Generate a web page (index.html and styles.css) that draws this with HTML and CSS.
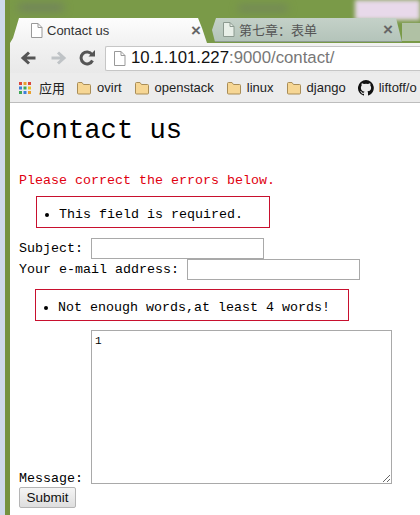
FILE: index.html
```html
<!DOCTYPE html>
<html lang="en">
<head>
<meta charset="utf-8">
<title>Contact us</title>
<link rel="stylesheet" href="styles.css">
</head>
<body>
<div class="window">
  <div class="desktop-edge"></div>
  <div class="browser">
    <div class="tabstrip">
      <div class="blur blur-a"></div>
      <div class="blur blur-b"></div>
      <div class="pink"></div>
      <div class="tab tab-active">
        <svg class="page-icon" width="13" height="15" viewBox="0 0 13 15"><path d="M1.500 .5h6.500l4 4v10h-10.500z" fill="#fff" stroke="#999"/><path d="M8 .5v4h4" fill="none" stroke="#999"/></svg>
        <span class="tab-title">Contact us</span>
        <span class="tab-close">×</span>
      </div>
      <div class="tab tab-other">
        <svg class="page-icon" width="13" height="15" viewBox="0 0 13 15"><path d="M1.500 .5h6.500l4 4v10h-10.500z" fill="#e8efe8" stroke="#8c9a90"/><path d="M8 .5v4h4" fill="none" stroke="#8c9a90"/></svg>
        <span class="tab-title tab-title-cjk">第七章：表单</span>
        <span class="tab-close">×</span>
      </div>
      <div class="tab-new"></div>
    </div>
    <div class="toolbar">
      <svg class="nav" width="17" height="16" viewBox="0 0 17 16"><path d="M15.500 8H4M9 2.500 3 8l6 5.500" fill="none" stroke="#555" stroke-width="3"/></svg>
      <svg class="nav" width="17" height="16" viewBox="0 0 17 16"><path d="M1.500 8H13M8 2.500 14 8l-6 5.500" fill="none" stroke="#bfc3c6" stroke-width="3"/></svg>
      <svg class="nav nav-reload" width="17" height="16" viewBox="0 0 17 16"><path d="M13.500 10.500A6 6 0 1 1 13 4.500" fill="none" stroke="#555" stroke-width="3"/><path d="M9.500 6.500h6.500V0z" fill="#555"/></svg>
      <div class="omnibox">
        <svg class="page-icon" width="13" height="15" viewBox="0 0 13 15"><path d="M1.500 .5h6.500l4 4v10h-10.500z" fill="#fff" stroke="#999"/><path d="M8 .5v4h4" fill="none" stroke="#999"/></svg>
        <span class="url"><span class="host">10.1.101.227</span>:9000/contact/</span>
      </div>
    </div>
    <div class="bookmarks">
      <span class="bm">
        <svg width="14" height="14" viewBox="0 0 14 14"><rect x="1" y="1" width="3" height="3" fill="#d9453a"/><rect x="5.500" y="1" width="3" height="3" fill="#e9a02d"/><rect x="10" y="1" width="3" height="3" fill="#d9453a"/><rect x="1" y="5.500" width="3" height="3" fill="#3d7fd9"/><rect x="5.500" y="5.500" width="3" height="3" fill="#3fa757"/><rect x="10" y="5.500" width="3" height="3" fill="#e9c02d"/><rect x="1" y="10" width="3" height="3" fill="#3fa757"/><rect x="5.500" y="10" width="3" height="3" fill="#3d7fd9"/><rect x="10" y="10" width="3" height="3" fill="#e9a02d"/></svg>
        <span class="bm-cjk">应用</span>
      </span>
      <span class="bm"><svg class="folder" width="16" height="14" viewBox="0 0 16 14"><path d="M1.500 12V2.500q0-1 1-1h3.500l1.500 2h6q1 0 1 1V12q0 1-1 1h-11q-1 0-1-1z" fill="#f6d694" stroke="#a98d57"/></svg>ovirt</span>
      <span class="bm"><svg class="folder" width="16" height="14" viewBox="0 0 16 14"><path d="M1.500 12V2.500q0-1 1-1h3.500l1.500 2h6q1 0 1 1V12q0 1-1 1h-11q-1 0-1-1z" fill="#f6d694" stroke="#a98d57"/></svg>openstack</span>
      <span class="bm"><svg class="folder" width="16" height="14" viewBox="0 0 16 14"><path d="M1.500 12V2.500q0-1 1-1h3.500l1.500 2h6q1 0 1 1V12q0 1-1 1h-11q-1 0-1-1z" fill="#f6d694" stroke="#a98d57"/></svg>linux</span>
      <span class="bm"><svg class="folder" width="16" height="14" viewBox="0 0 16 14"><path d="M1.500 12V2.500q0-1 1-1h3.500l1.500 2h6q1 0 1 1V12q0 1-1 1h-11q-1 0-1-1z" fill="#f6d694" stroke="#a98d57"/></svg>django</span>
      <span class="bm"><svg width="16" height="16" viewBox="0 0 16 16"><path fill="#111" d="M8 0a8 8 0 0 0-2.500 15.600c.4.100.5-.2.500-.4v-1.400c-2.200.5-2.700-1-2.700-1-.4-.9-.9-1.200-.9-1.200-.7-.5.100-.5.100-.5.800.100 1.200.8 1.200.8.700 1.200 1.900.9 2.300.7.100-.5.300-.9.500-1.100-1.800-.2-3.600-.9-3.600-4 0-.9.300-1.600.8-2.100-.1-.2-.4-1 .100-2.100 0 0 .7-.2 2.200.8a7.600 7.600 0 0 1 4 0c1.500-1 2.200-.8 2.200-.8.400 1.100.2 1.900.1 2.100.5.600.8 1.300.8 2.100 0 3.100-1.900 3.700-3.700 3.900.3.300.6.800.6 1.500v2.200c0 .2.100.5.600.4A8 8 0 0 0 8 0z"/></svg>liftoff/o</span>
    </div>
    <main class="page">
      <h1 class="title">Contact us</h1>
      <p class="error-summary">Please correct the errors below.</p>
      <form class="contact-form">
        <ul class="errorlist errorlist-first"><li>This field is required.</li></ul>
        <div class="row">Subject: <input class="field" type="text"></div>
        <div class="row">Your e-mail address: <input class="field" type="text"></div>
        <ul class="errorlist errorlist-second"><li>Not enough words,at least 4 words!</li></ul>
        <div class="row message-row"><span class="message-label">Message: </span><textarea class="message">1</textarea></div>
        <button class="submit" type="button">Submit</button>
      </form>
    </main>
  </div>
</div>
</body>
</html>
```
FILE: styles.css
```css
html, body { margin: 0; padding: 0; }
body { width: 420px; height: 515px; overflow: hidden; background: #fff; }
.window { display: flex; width: 420px; height: 515px; overflow: hidden; }
.desktop-edge { width: 10px; flex: none; background: linear-gradient(90deg, #cfd9ea 0 5px, #76923f 5px 10px); }
.browser { flex: 1; min-width: 0; display: flex; flex-direction: column; }
.tabstrip { position: relative; height: 43px; flex: none; display: flex; align-items: flex-end; background: #7a9a48; box-sizing: border-box; }
.blur { position: absolute; filter: blur(4px); background: #70805f; border-radius: 4px; }
.blur-a { left: 8px; top: 4px; width: 46px; height: 7px; }
.blur-b { left: 228px; top: 6px; width: 50px; height: 5px; }
.pink { position: absolute; left: 345px; top: 0; width: 65px; height: 20px; background: #e8d9ea; filter: blur(2px); }
.tab { position: relative; display: flex; align-items: center; box-sizing: border-box; }
.tab-active { width: 197px; height: 25px; padding: 0 6px 0 20px; background: linear-gradient(#fdfdfd, #f2f2f2); clip-path: polygon(0 100%, 3px 80%, 9px 0, 188px 0, 192px 40%, 197px 100%); }
.tab-other { width: 190px; height: 24px; margin-left: 5px; margin-bottom: 1px; padding: 0 9px 0 10px; background: linear-gradient(#c4d1c8, #b4c4ba); border-bottom: 1px solid #8e9c92; clip-path: polygon(0 50%, 4px 0, 184px 0, 190px 100%, 3px 100%); }
.tab-new { flex: 1; height: 18px; margin-bottom: 2px; background: #c7d2cc; opacity: .7; }
.tab-title { flex: 1; margin-left: 4px; font: 13px "Liberation Sans", sans-serif; color: #333; white-space: nowrap; overflow: hidden; }
.tab-title-cjk { font-family: "Noto Sans CJK SC", sans-serif; color: #555; }
.tab-close { font: bold 17px "Liberation Sans", sans-serif; color: #666; line-height: 1; }
.page-icon { flex: none; }
.toolbar { height: 30px; flex: none; display: flex; align-items: center; gap: 13px; padding-left: 10px; box-sizing: border-box; background: linear-gradient(#f2f2f2, #e9e9e9); }
.nav { flex: none; }
.nav-reload { margin-left: -1px; }
.omnibox { flex: 1; height: 25px; margin-left: -4px; display: flex; align-items: center; gap: 5px; padding-left: 7px; box-sizing: border-box; background: #fff; border: 1px solid #c6c6c6; border-right: none; border-radius: 2px 0 0 2px; }
.url { font: 16.800px "Liberation Sans", sans-serif; color: #777; white-space: nowrap; }
.host { color: #111; }
.bookmarks { height: 30px; flex: none; display: flex; align-items: center; gap: 12px; padding-left: 8px; box-sizing: border-box; white-space: nowrap; overflow: hidden; background: #ececec; border-bottom: 1px solid #bdbdbd; font: 13px "Liberation Sans", sans-serif; color: #222; }
.bm { display: inline-flex; align-items: center; gap: 5px; flex: none; }
.bm-cjk { margin-left: 2px; margin-right: -1px; font-family: "Noto Sans CJK SC", sans-serif; }
.page { flex: 1; min-height: 0; padding: 0 0 0 9px; font: 13.333px/21px "Liberation Mono", monospace; color: #000; }
.title { margin: 0; padding-top: 9px; font: 400 27.200px/38px "Liberation Mono", monospace; }
.error-summary { margin: 20px 0 0; color: #e0000f; line-height: 22px; }
.contact-form { margin: 0; }
.errorlist { padding: 0 0 0 22px; border: 1px solid #c8102e; box-sizing: border-box; line-height: 36px; }
.errorlist-first { width: 234px; height: 32px; margin: 4px 0 10px 17px; }
.errorlist-second { width: 314px; height: 32px; margin: 9px 0 9px 16px; }
.row { height: 21px; line-height: 22px; white-space: nowrap; }
.field { width: 173px; height: 21px; padding: 0 2px; box-sizing: border-box; border: 1px solid #a9a9a9; vertical-align: top; margin: 0; }
.message-row { height: auto; display: flex; align-items: flex-end; }
.message-label { white-space: pre; line-height: 17px; margin-bottom: -3px; }
.message { width: 301px; height: 154px; padding: 4px 3px 3px; box-sizing: border-box; border: 1px solid #a9a9a9; margin: 0; font: 11px "Liberation Mono", monospace; display: block; }
.submit { display: block; margin: 3px 0 0; width: 57px; height: 21px; padding: 0; border: 1px solid #b5b5b5; border-radius: 2px; background: linear-gradient(#f5f5f5, #dedede); font: 13.500px "Liberation Sans", sans-serif; color: #111; }
```
